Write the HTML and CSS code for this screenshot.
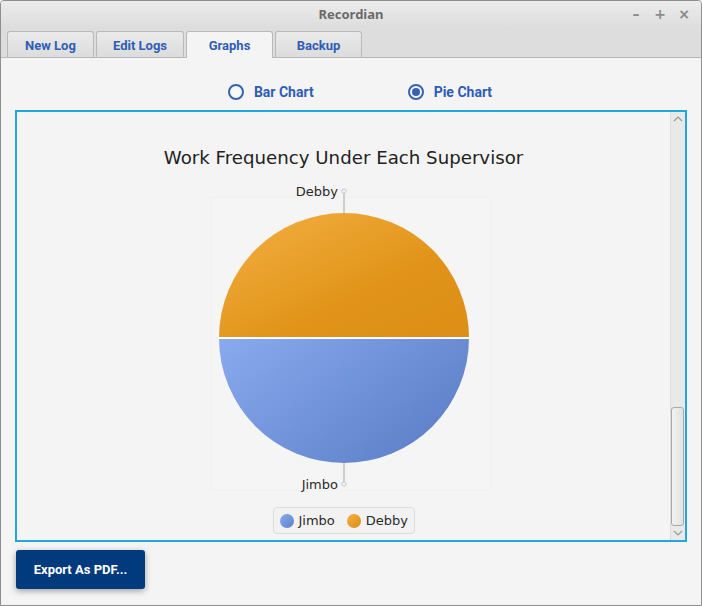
FILE: index.html
```html
<!DOCTYPE html>
<html>
<head>
<meta charset="utf-8">
<link rel="stylesheet" href="styles.css">
</head>
<body>
<div class="window">
  <div class="titlebar">
    <div></div>
    <div class="title">Recordian</div>
    <div class="controls"><span>&#8211;</span><span>+</span><span>&#215;</span></div>
  </div>
  <div class="tabbar">
    <div class="tab">New Log</div>
    <div class="tab wide">Edit Logs</div>
    <div class="tab active">Graphs</div>
    <div class="tab">Backup</div>
  </div>
  <div class="content">
    <div class="radios">
      <label class="radio"><span class="dot"></span>Bar Chart</label>
      <label class="radio checked"><span class="dot"></span>Pie Chart</label>
    </div>
    <div class="chartbox">
      <div class="chart">
        <div class="chart-title">Work Frequency Under Each Supervisor</div>
        <svg class="plot" width="300" height="312" viewBox="0 0 300 312">
          <defs>
            <linearGradient id="og" x1="0" y1="0" x2="1" y2="1">
              <stop offset="0" stop-color="#f4b045"/>
              <stop offset="0.6" stop-color="#e19419"/>
              <stop offset="1" stop-color="#dc8e16"/>
            </linearGradient>
            <linearGradient id="bg" x1="0" y1="0" x2="1" y2="0.6">
              <stop offset="0" stop-color="#8aaaee"/>
              <stop offset="1" stop-color="#5e81c9"/>
            </linearGradient>
          </defs>
          <rect x="17" y="17" width="280" height="293" fill="#f5f5f5" stroke="#efefef"/>
          <path d="M25 158 A125 125 0 0 1 275 158 Z" fill="url(#og)"/>
          <path d="M25 158 A125 125 0 0 0 275 158 Z" fill="url(#bg)"/>
          <line x1="25" y1="158" x2="275" y2="158" stroke="#ffffff" stroke-width="2"/>
          <line x1="150" y1="12" x2="150" y2="33" stroke="#cfcfcf" stroke-width="2"/>
          <circle cx="150" cy="11" r="2.2" fill="#f4f4f4" stroke="#c8c8c8" stroke-width="1"/>
          <line x1="150" y1="283" x2="150" y2="303" stroke="#cfcfcf" stroke-width="2"/>
          <circle cx="150" cy="304" r="2.2" fill="#f4f4f4" stroke="#c8c8c8" stroke-width="1"/>
          <text x="144" y="16" text-anchor="end" class="lbl">Debby</text>
          <text x="144" y="309" text-anchor="end" class="lbl">Jimbo</text>
        </svg>
        <div class="legend">
          <span class="sw blue"></span><span class="lt">Jimbo</span>
          <span class="sw orange"></span><span class="lt">Debby</span>
        </div>
      </div>
      <div class="scrollbar">
        <div class="arrow">
          <svg width="10" height="6" viewBox="0 0 10 6"><path d="M1 5 L5 1 L9 5" fill="none" stroke="#999" stroke-width="1.2"/></svg>
        </div>
        <div class="track"><div class="thumb"></div></div>
        <div class="arrow">
          <svg width="10" height="6" viewBox="0 0 10 6"><path d="M1 1 L5 5 L9 1" fill="none" stroke="#999" stroke-width="1.2"/></svg>
        </div>
      </div>
    </div>
    <div class="actions">
      <button class="export">Export As PDF...</button>
    </div>
  </div>
</div>
</body>
</html>
```
FILE: styles.css
```css
* { box-sizing: border-box; }
html, body { margin: 0; padding: 0; }
body { width: 702px; height: 606px; background: #f4f4f4; overflow: hidden; }
.window {
  width: 702px; height: 606px;
  border: 1px solid #8e8e8e;
  border-radius: 4px 4px 0 0;
  display: flex; flex-direction: column;
  background: #f4f4f4;
  font-family: Roboto, "Noto Sans", sans-serif;
}
.titlebar {
  height: 25px;
  display: grid; grid-template-columns: 1fr auto 1fr; align-items: center;
  background: linear-gradient(#ececec, #dedede);
  border-radius: 3px 3px 0 0;
}
.title { font-family: "Noto Sans", sans-serif; font-weight: bold; font-size: 13px; color: #6b6b6b; }
.controls { display: flex; justify-content: flex-end; gap: 12px; padding-right: 11px; color: #8a8a8a; font-family: "DejaVu Sans", sans-serif; font-size: 14px; font-weight: bold; }
.controls span { width: 12px; text-align: center; }
.tabbar {
  height: 32px;
  display: flex; align-items: flex-end; gap: 2px;
  padding-left: 6px;
  background: #dddddd;
  border-bottom: 1px solid #b8b8b8;
}
.tab {
  width: 87px; height: 26px;
  display: flex; align-items: center; justify-content: center;
  padding-top: 1px;
  border: 1px solid #b9b9b9; border-bottom: none;
  border-radius: 3px 3px 0 0;
  background: linear-gradient(#eaeaea, #dcdcdc);
  color: #2f5db5; font-weight: bold; font-size: 13px;
}
.tab.wide { width: 88px; }
.tab.active { height: 27px; margin-bottom: -1px; background: #f4f4f4; }
.content { flex: 1; display: flex; flex-direction: column; padding: 24px 14px 0 14px; }
.radios { height: 20px; display: flex; justify-content: center; gap: 94px; padding-left: 18px; }
.radio { display: flex; align-items: center; gap: 10px; color: #2f5db5; font-weight: bold; font-size: 14px; }
.dot { width: 16px; height: 16px; border-radius: 50%; border: 2px solid #3563b4; background: #f8f8f8; display: flex; align-items: center; justify-content: center; }
.radio.checked .dot::after { content: ""; width: 8px; height: 8px; border-radius: 50%; background: #3563b4; }
.chartbox {
  margin-top: 8px;
  height: 432px;
  border: 2px solid #21a6de;
  display: flex;
  background: #f4f4f4;
}
.chart { flex: 1; display: flex; flex-direction: column; align-items: center; }
.chart-title { margin-top: 35px; font-family: "DejaVu Sans", sans-serif; font-size: 18.2px; line-height: 22px; color: #222222; }
.plot { margin-top: 11px; display: block; }
.lbl { font-family: "DejaVu Sans", sans-serif; font-size: 13px; fill: #2a2a2a; }
.legend {
  margin-top: 15px;
  height: 27px; width: 142px;
  display: flex; align-items: center; padding-left: 6px;
  border: 1px solid #dcdcdc; border-radius: 4px;
  background: #f2f2f2;
  font-family: "DejaVu Sans", sans-serif; font-size: 13px; color: #2a2a2a;
}
.sw { width: 14px; height: 14px; border-radius: 50%; margin-right: 5px; }
.sw.blue { background: linear-gradient(135deg, #8aaaee, #5e81c9); }
.sw.orange { background: linear-gradient(135deg, #f4b045, #dc8e16); margin-left: 12px; }
.scrollbar { width: 15px; display: flex; flex-direction: column; background: #e9e9e9; border-left: 1px solid #dcdcdc; }
.arrow { height: 14px; display: flex; align-items: center; justify-content: center; }
.track { flex: 1; display: flex; flex-direction: column; justify-content: flex-end; padding: 0 1px 0 0; }
.thumb { height: 119px; border: 1px solid #a9a9a9; border-radius: 3px; background: linear-gradient(90deg, #f2f2f2, #e2e2e2); }
.actions { margin-top: 8px; padding-left: 1px; }
.export {
  width: 129px; height: 39px;
  border: none; border-radius: 3px;
  background: #023a7e; color: #ffffff;
  font-family: Roboto, sans-serif; font-weight: bold; font-size: 13px;
  box-shadow: 0 2px 6px rgba(0,0,0,0.35);
}
```
